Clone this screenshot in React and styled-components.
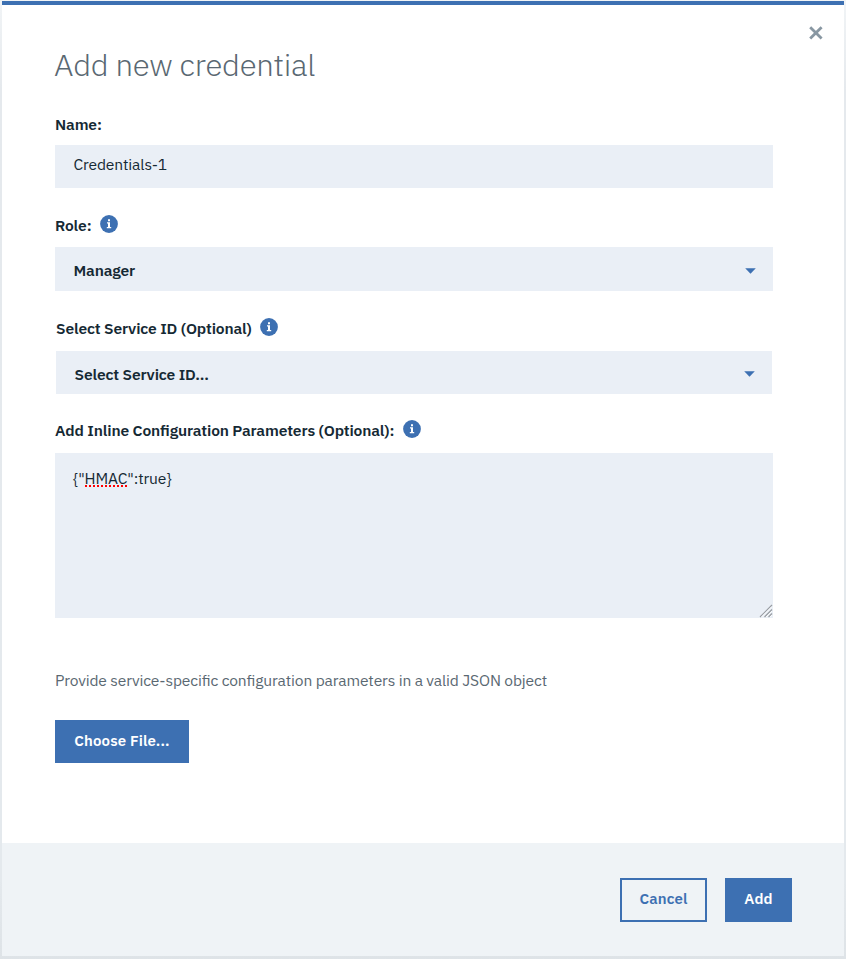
import React from "react";
import styled, { createGlobalStyle } from "styled-components";

const colors = {
  blue: "#3d70b2",
  ink: "#152934",
  muted: "#5a6872",
  field: "#eaeff6",
  footer: "#eff3f6",
};

const GlobalStyle = createGlobalStyle`
  *, *::before, *::after { box-sizing: border-box; }
  body {
    margin: 0;
    background: #fff;
    font-family: "IBM Plex Sans", Roboto, "Liberation Sans", sans-serif;
    font-size: 15.6px;
    line-height: 20px;
    letter-spacing: -0.14px;
    font-feature-settings: "liga" 1;
    color: ${colors.ink};
  }
`;

const Backdrop = styled.div`
  height: 959px;
  padding: 1px 2px 3px;
  background: linear-gradient(#f1f4f6, #e5e9ed 90px, #e4e9ed 880px, #dee3e7);
  overflow: hidden;
`;

const Modal = styled.section`
  display: flex;
  flex-direction: column;
  height: 955px;
  border-top: 4px solid ${colors.blue};
  background: #fff;
`;

const Body = styled.div`
  display: flex;
  flex-direction: column;
  align-items: flex-start;
  flex: 1;
  padding: 0 71px 0 53px;
`;

const Header = styled.header`
  display: flex;
  justify-content: space-between;
  align-self: stretch;
  height: 110px;
  padding-top: 40px;
`;

const Title = styled.h1`
  margin: 0 0 0 -1px;
  font-size: 31.2px;
  font-weight: 300;
  line-height: 40px;
  letter-spacing: -0.29px;
  color: ${colors.muted};
`;

const CloseButton = styled.button`
  display: flex;
  width: 14px;
  height: 14px;
  margin: -19px -50px 0 0;
  padding: 0;
  border: 0;
  background: none;
`;

const Field = styled.div`
  align-self: stretch;
  padding: 0 ${(p) => (p.$inset ? "1px" : "0")};
  margin-bottom: ${(p) => p.$gap}px;
`;

const Label = styled.div`
  display: flex;
  align-items: flex-start;
  gap: 8.6px;
  height: ${(p) => p.$height}px;
  font-weight: 600;
  line-height: 18px;

  svg {
    margin-top: -1px;
  }
`;

const Control = styled.div`
  display: flex;
  align-items: center;
  justify-content: space-between;
  height: ${(p) => p.$height}px;
  padding: ${(p) => p.$pad} 17px 0 18.5px;
  background: ${colors.field};
  font-weight: ${(p) => (p.$strong ? 600 : 400)};

  svg {
    margin-top: 1px;
  }
`;

const TextInput = styled(Control)`
  padding-top: 0;
  padding-bottom: 5px;
`;

const TextArea = styled.div`
  display: flex;
  justify-content: space-between;
  height: 165px;
  padding: 15px 0 0 18px;
  background: ${colors.field};
`;

const Misspelled = styled.span`
  background: repeating-linear-gradient(90deg, #f00 0 2px, transparent 2px 4px)
    0 calc(100% - 1px) / 100% 2px no-repeat;
`;

const ResizeGrip = styled.svg`
  align-self: flex-end;
  display: block;
`;

const Hint = styled.p`
  margin: -1px 0 30px;
  color: ${colors.muted};
`;

const Button = styled.button`
  width: ${(p) => p.$width}px;
  height: ${(p) => p.$height}px;
  padding: 0 0 ${(p) => p.$drop || 3}px;
  border: 2px solid ${colors.blue};
  background: ${(p) => (p.$outline ? "transparent" : colors.blue)};
  color: ${(p) => (p.$outline ? colors.blue : "#fff")};
  font: 600 15px/20px "IBM Plex Sans", Roboto, "Liberation Sans", sans-serif;
  letter-spacing: 0.13px;
  white-space: nowrap;
`;

const Footer = styled.footer`
  display: flex;
  justify-content: flex-end;
  align-items: flex-start;
  gap: 18px;
  height: 113px;
  padding: 35px 52px 0;
  background: ${colors.footer};
`;

const InfoIcon = () => (
  <svg width="18" height="18" viewBox="0 0 18 18">
    <circle cx="9" cy="9" r="8.9" fill={colors.blue} />
    <path
      fill="#fff"
      d="M8 4.3h2v1.9H8zM7 7.3h3v4.7h1.2v1.3H6.8V12H8V8.5H7z"
    />
  </svg>
);

const Caret = () => (
  <svg width="11" height="6" viewBox="0 0 11 6">
    <path d="M0.2 0.3h10.6L5.5 5.7z" fill={colors.blue} />
  </svg>
);

export default function App() {
  return (
    <Backdrop>
      <GlobalStyle />
      <Modal>
        <Body>
          <Header>
            <Title>Add new credential</Title>
            <CloseButton aria-label="Close">
              <svg width="14" height="14" viewBox="0 0 14 14">
                <path d="M1.2 1.2L12.6 12.6M12.6 1.2L1.2 12.6" stroke="#8897a2" strokeWidth="2.8" />
              </svg>
            </CloseButton>
          </Header>

          <Field $gap={28}>
            <Label $height={30}>Name:</Label>
            <TextInput $height={43} $pad="0">Credentials-1</TextInput>
          </Field>

          <Field $gap={28}>
            <Label $height={31}>
              Role:
              <InfoIcon />
            </Label>
            <Control $height={44} $pad="2px" $strong>
              Manager
              <Caret />
            </Control>
          </Field>

          <Field $gap={27} $inset>
            <Label $height={32}>
              Select Service ID (Optional)
              <InfoIcon />
            </Label>
            <Control $height={43} $pad="2px" $strong>
              Select Service ID...
              <Caret />
            </Control>
          </Field>

          <Field $gap={53}>
            <Label $height={32}>
              Add Inline Configuration Parameters (Optional):
              <InfoIcon />
            </Label>
            <TextArea>
              <div>
                {'{"'}
                <Misspelled>HMAC</Misspelled>
                {'":true}'}
              </div>
              <ResizeGrip width="14" height="14" viewBox="0 0 14 14">
                <path d="M1 13L13 1M5.5 13L13 5.5M9.5 13L13 9.5" stroke="#999da3" strokeWidth="1.2" />
                <path d="M2.5 13L13 2.5M7 13L13 7M11 13L13 11" stroke="#fff" strokeWidth="0.8" />
              </ResizeGrip>
            </TextArea>
          </Field>

          <Hint>Provide service-specific configuration parameters in a valid JSON object</Hint>
          <Button $width={134} $height={43} $drop={2}>Choose File...</Button>
        </Body>
        <Footer>
          <Button $width={87} $height={44} $outline>Cancel</Button>
          <Button $width={67} $height={44}>Add</Button>
        </Footer>
      </Modal>
    </Backdrop>
  );
}
